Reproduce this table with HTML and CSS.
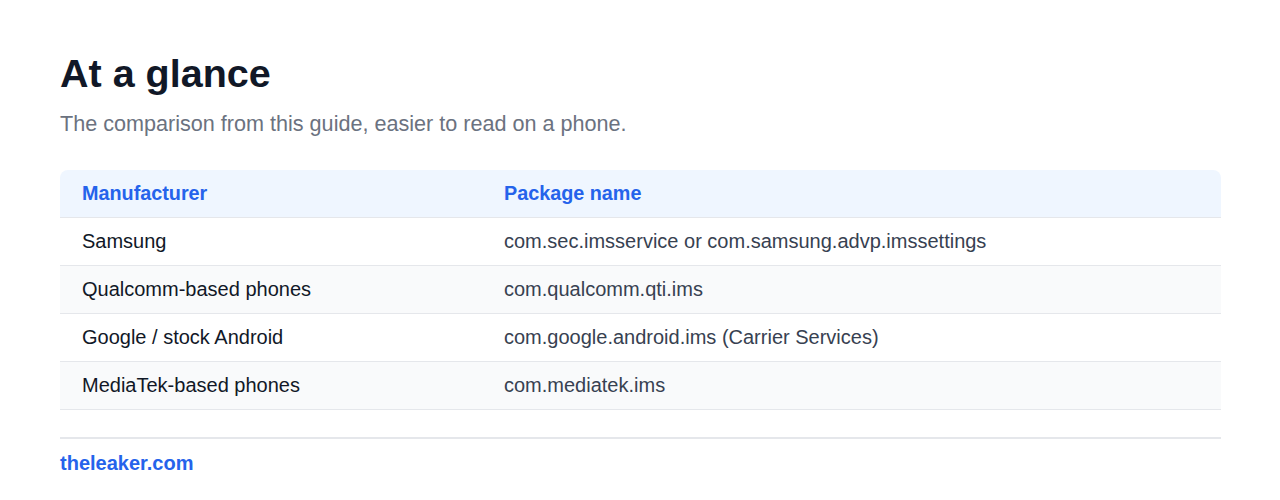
FILE: index.html
```html
<!DOCTYPE html>
<html lang="en">
<head>
<meta charset="utf-8">
<title>At a glance</title>
<link rel="stylesheet" href="styles.css">
</head>
<body>
<main class="page">
  <h1 class="title">At a glance</h1>
  <p class="subtitle">The comparison from this guide, easier to read on a phone.</p>
  <table class="grid">
    <colgroup><col class="col-a"><col class="col-b"></colgroup>
    <thead>
      <tr><th>Manufacturer</th><th>Package name</th></tr>
    </thead>
    <tbody>
      <tr><td class="name">Samsung</td><td>com.sec.imsservice or com.samsung.advp.imssettings</td></tr>
      <tr><td class="name">Qualcomm-based phones</td><td>com.qualcomm.qti.ims</td></tr>
      <tr><td class="name">Google / stock Android</td><td>com.google.android.ims (Carrier Services)</td></tr>
      <tr><td class="name">MediaTek-based phones</td><td>com.mediatek.ims</td></tr>
    </tbody>
  </table>
  <footer class="foot"><a class="brand" href="#">theleaker.com</a></footer>
</main>
</body>
</html>
```
FILE: styles.css
```css
* { box-sizing: border-box; }
html, body { margin: 0; padding: 0; background: #fff; }
body { font-family: "Liberation Sans", Arial, sans-serif; color: #111827; }
.page { padding: 48px 59px 0 60px; }
.title { margin: 0; font-size: 39.5px; line-height: 50px; font-weight: 700; color: #111827; }
.subtitle { margin: 12px 0 0; font-size: 21.6px; line-height: 28px; color: #6b7280; }
.grid { margin-top: 32px; width: 100%; table-layout: fixed; border-collapse: separate; border-spacing: 0; font-size: 20px; }
.col-a { width: 422px; }
.grid th { text-align: left; background: #eff6ff; color: #2563eb; font-weight: 700; font-size: 19.8px; height: 48px; padding: 0 22px; border-bottom: 1px solid #e5e7eb; }
.grid th:first-child { border-top-left-radius: 8px; }
.grid th:last-child { border-top-right-radius: 8px; }
.grid td { height: 48px; padding: 0 22px; border-bottom: 1px solid #e5e7eb; color: #374151; }
.grid td.name { color: #111827; }
.grid tbody tr:nth-child(even) td { background: #f9fafb; }
.foot { margin-top: 27px; border-top: 2px solid #e5e7eb; padding-top: 10px; }
.brand { color: #2563eb; font-weight: 700; font-size: 20px; text-decoration: none; line-height: 28px; }
```
